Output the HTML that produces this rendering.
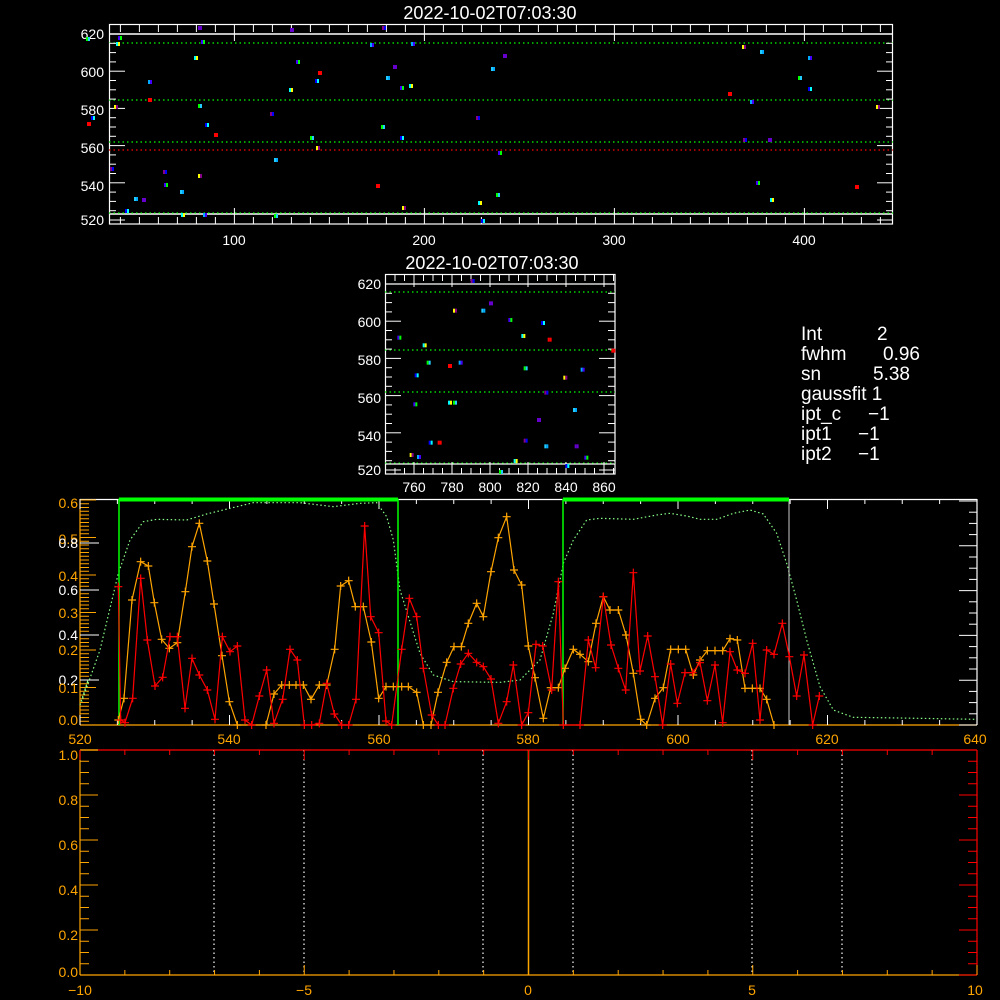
<!DOCTYPE html>
<html><head><meta charset="utf-8"><style>
html,body{margin:0;padding:0;background:#000;width:1000px;height:1000px;overflow:hidden}
svg{display:block}
text{font-family:"Liberation Sans",sans-serif}
</style></head><body>
<svg id="s" width="1000" height="1000" viewBox="0 0 1000 1000" xmlns="http://www.w3.org/2000/svg">
<rect width="1000" height="1000" fill="#000"/>
<text x="490" y="19" fill="#fff" font-size="18" text-anchor="middle">2022-10-02T07:03:30</text>
<rect x="109.5" y="24.5" width="783" height="199.5" fill="none" stroke="#fff" stroke-width="1.2"/>
<line x1="109" y1="34" x2="893" y2="34" stroke="#fff" stroke-width="1.5"/>
<line x1="109" y1="214" x2="893" y2="214" stroke="#fff" stroke-width="1.5"/>
<g stroke="#0f0" stroke-dasharray="1.5 3" stroke-width="1.2">
<line x1="109" y1="43" x2="893" y2="43"/><line x1="109" y1="100" x2="893" y2="100"/>
<line x1="109" y1="142" x2="893" y2="142"/><line x1="109" y1="213" x2="893" y2="213"/></g>
<line x1="109" y1="150" x2="893" y2="150" stroke="#f00" stroke-dasharray="1.5 3" stroke-width="1.2"/>
<g fill="#fff" font-size="14" text-anchor="end">
<text x="104" y="39">620</text><text x="104" y="77">600</text><text x="104" y="115">580</text>
<text x="104" y="153">560</text><text x="104" y="191">540</text><text x="104" y="225">520</text></g>
<g fill="#fff" font-size="14" text-anchor="middle">
<text x="234" y="245">100</text><text x="424" y="245">200</text><text x="614" y="245">300</text><text x="804" y="245">400</text></g>
<g id="topticks" stroke="#fff" stroke-width="1"></g>
<g id="toppts"></g>
<text x="492" y="269" fill="#fff" font-size="18" text-anchor="middle">2022-10-02T07:03:30</text>
<rect x="385.5" y="274.5" width="229.5" height="199.5" fill="none" stroke="#fff" stroke-width="1.2"/>
<line x1="385" y1="284" x2="615" y2="284" stroke="#fff" stroke-width="1.2"/>
<line x1="385" y1="464" x2="615" y2="464" stroke="#fff" stroke-width="1.2"/>
<g stroke="#0f0" stroke-dasharray="1.5 3" stroke-width="1.2">
<line x1="385" y1="292" x2="615" y2="292"/><line x1="385" y1="350" x2="615" y2="350"/><line x1="385" y1="392" x2="615" y2="392"/></g>
<line x1="385" y1="463" x2="615" y2="463" stroke="#0f0" stroke-dasharray="1.5 3"/>
<g fill="#fff" font-size="14" text-anchor="end">
<text x="381" y="289">620</text><text x="381" y="327">600</text><text x="381" y="365">580</text>
<text x="381" y="403">560</text><text x="381" y="441">540</text><text x="381" y="475">520</text></g>
<g fill="#fff" font-size="14" text-anchor="middle">
<text x="414" y="492">760</text><text x="452" y="492">780</text><text x="490" y="492">800</text>
<text x="528" y="492">820</text><text x="566" y="492">840</text><text x="604" y="492">860</text></g>
<g id="midticks" stroke="#fff" stroke-width="1"></g>
<g id="midpts"></g>
<g fill="#fff" font-size="19">
<text x="801" y="340">Int</text><text x="877" y="340">2</text>
<text x="801" y="360">fwhm</text><text x="883" y="360">0.96</text>
<text x="801" y="380">sn</text><text x="873" y="380">5.38</text>
<text x="801" y="400">gaussfit 1</text>
<text x="801" y="420">ipt_c</text><text x="868" y="420">−1</text>
<text x="801" y="440">ipt1</text><text x="858" y="440">−1</text>
<text x="801" y="460">ipt2</text><text x="858" y="460">−1</text></g>
<line x1="80" y1="499.5" x2="977" y2="499.5" stroke="#fff" stroke-width="1.2"/>
<line x1="977" y1="499" x2="977" y2="725" stroke="#fff" stroke-width="1.2"/>
<line x1="80" y1="499" x2="80" y2="725" stroke="#ffa500" stroke-width="1.2"/>
<line x1="80" y1="725" x2="977" y2="725" stroke="#ffa500" stroke-width="1.2"/>
<g id="spticks"></g>
<polyline id="green" fill="none" stroke="#8f8" stroke-width="1.2" stroke-dasharray="1.5 2.5"/>
<g stroke="#0f0" stroke-width="1.5">
<line x1="119" y1="499" x2="119" y2="725"/><line x1="398" y1="499" x2="398" y2="725"/>
<line x1="563" y1="499" x2="563" y2="725"/><line x1="789" y1="499" x2="789" y2="725" stroke="#ccc" stroke-width="1"/></g>
<line x1="119" y1="499.5" x2="398" y2="499.5" stroke="#0f0" stroke-width="4"/>
<line x1="563" y1="499.5" x2="789" y2="499.5" stroke="#0f0" stroke-width="4"/>
<g id="curves"></g>
<g font-size="14">
<text x="78" y="508" fill="#ffa500" text-anchor="end">0.6</text>
<text x="78" y="544" fill="#ffa500" text-anchor="end">0.5</text>
<text x="78" y="548" fill="#fff" text-anchor="end">0.8</text>
<text x="78" y="581" fill="#ffa500" text-anchor="end">0.4</text>
<text x="78" y="595" fill="#fff" text-anchor="end">0.6</text>
<text x="78" y="618" fill="#ffa500" text-anchor="end">0.3</text>
<text x="78" y="640" fill="#fff" text-anchor="end">0.4</text>
<text x="78" y="655" fill="#ffa500" text-anchor="end">0.2</text>
<text x="78" y="685" fill="#fff" text-anchor="end">0.2</text>
<text x="78" y="693" fill="#ffa500" text-anchor="end">0.1</text>
<text x="78" y="725" fill="#ffa500" text-anchor="end">0.0</text></g>
<g fill="#ffa500" font-size="14" text-anchor="middle">
<text x="80" y="744">520</text><text x="229" y="744">540</text><text x="379" y="744">560</text>
<text x="528" y="744">580</text><text x="678" y="744">600</text><text x="827" y="744">620</text><text x="975" y="744">640</text></g>
<line x1="80" y1="750" x2="977" y2="750" stroke="#f00" stroke-width="1.2"/>
<line x1="977" y1="750" x2="977" y2="975" stroke="#f00" stroke-width="1.2"/>
<line x1="80" y1="750" x2="80" y2="975" stroke="#ffa500" stroke-width="1.2"/>
<line x1="80" y1="975" x2="977" y2="975" stroke="#ffa500" stroke-width="1.2"/>
<line x1="80" y1="750" x2="98" y2="750" stroke="#ff0" stroke-width="1.2"/>
<g stroke="#fff" stroke-dasharray="1.5 3" stroke-width="1.2">
<line x1="214" y1="750" x2="214" y2="975"/><line x1="304" y1="750" x2="304" y2="975"/>
<line x1="483" y1="750" x2="483" y2="975"/><line x1="573" y1="750" x2="573" y2="975"/>
<line x1="752" y1="750" x2="752" y2="975"/><line x1="842" y1="750" x2="842" y2="975"/></g>
<line x1="528.5" y1="750" x2="528.5" y2="975" stroke="#ffa500" stroke-width="1.5"/>
<g id="btticks"></g>
<g fill="#ffa500" font-size="14" text-anchor="end">
<text x="78" y="760">1.0</text><text x="78" y="805">0.8</text><text x="78" y="850">0.6</text>
<text x="78" y="895">0.4</text><text x="78" y="940">0.2</text><text x="78" y="977">0.0</text></g>
<g fill="#ffa500" font-size="14" text-anchor="middle">
<text x="80" y="995">−10</text><text x="304" y="995">−5</text><text x="528" y="995">0</text>
<text x="752" y="995">5</text><text x="975" y="995">10</text></g>
</svg>
<script>
var NS="http://www.w3.org/2000/svg";
function el(p,t,a){var e=document.createElementNS(NS,t);for(var k in a)e.setAttribute(k,a[k]);p.appendChild(e);return e;}
function g(id){return document.getElementById(id);}
var tt=g("topticks");
for(var v=520;v<=620;v+=5){var y=220-(v-520)*1.86;var L=(v%20==0)?16:7;el(tt,"line",{x1:109,y1:y,x2:109+L,y2:y});el(tt,"line",{x1:893,y1:y,x2:893-L,y2:y});}
for(var v=40;v<=440;v+=10){var x=109+(v-34)*1.9;var L=(v%100==0)?16:7;el(tt,"line",{x1:x,y1:224,x2:x,y2:224-L});el(tt,"line",{x1:x,y1:25,x2:x,y2:25+L});}
var mt=g("midticks");
for(var v=520;v<=620;v+=5){var y=470-(v-520)*1.86;var L=(v%20==0)?16:7;el(mt,"line",{x1:385,y1:y,x2:385+L,y2:y});el(mt,"line",{x1:615,y1:y,x2:615-L,y2:y});}
for(var v=750;v<=865;v+=5){var x=414+(v-760)*1.9;var L=(v%20==0)?12:6;el(mt,"line",{x1:x,y1:474,x2:x,y2:474-L});el(mt,"line",{x1:x,y1:275,x2:x,y2:275+L});}
var cols=["#40f","#0ff","#0f0","#00f","#f00","#ff0","#0af","#808","#2cf","#60c"];
function pts(id,list){var G=g(id);list.forEach(function(p,i){el(G,"rect",{x:p[0]-2,y:p[1]-2,width:2,height:4,fill:cols[i%10]});el(G,"rect",{x:p[0],y:p[1]-2,width:2,height:4,fill:cols[(i*3+2)%10]});});}
pts("toppts",[[120,38],[118,44],[88,39],[93,118],[89,124],[116,107],[150,82],[165,172],[182,192],[200,28],[203,42],[196,58],[200,106],[207,125],[216,135],[200,176],[205,215],[272,114],[276,160],[292,30],[298,62],[291,90],[312,138],[317,81],[320,73],[318,148],[372,45],[384,28],[388,78],[395,67],[402,88],[411,86],[383,127],[402,138],[378,186],[404,208],[413,44],[478,118],[493,69],[505,56],[500,153],[480,203],[498,195],[483,221],[730,94],[744,47],[752,102],[745,140],[762,52],[770,140],[758,183],[772,200],[800,78],[810,89],[857,187],[878,107],[810,58],[112,169],[136,199],[144,200],[166,185],[183,215],[276,216],[127,211],[150,100]]);
var mp=[[178,263],[254,286],[266,338],[230,376],[330,348],[345,182],[362,338],[398,93],[430,182],[453,160],[511,210],[550,258],[557,355],[609,219],[629,269],[676,383],[728,359],[619,428],[705,480],[597,510],[226,463],[330,458],[345,458],[272,578],[299,578],[215,615],[237,621],[557,572],[619,589],[710,589],[739,623],[527,633],[483,666],[682,648],[820,302]].map(function(p){return [340+p[0]/3,250+p[1]/3];});
pts("midpts",mp);
var st=g("spticks");
for(var i=0;i<=60;i++){var y=725-i*3.75;var L=(i%10==0)?16:9;el(st,"line",{x1:80,y1:y,x2:80+L,y2:y,stroke:"#ffa500"});}
[680,635,590,543].forEach(function(y){el(st,"line",{x1:80,y1:y,x2:99,y2:y,stroke:"#fff"});});
for(var i=0;i<=20;i++){var y=725-i*11.2;var L=(i%4==0)?18:8;el(st,"line",{x1:977,y1:y,x2:977-L,y2:y,stroke:"#fff"});}
for(var v=520;v<=640;v+=5){var x=80+(v-520)*7.475;var L=(v%20==0)?10:5;el(st,"line",{x1:x,y1:725,x2:x,y2:725-L,stroke:"#fff"});el(st,"line",{x1:x,y1:499,x2:x,y2:499+L,stroke:"#fff"});}
var bt=g("btticks");
for(var i=0;i<=20;i++){var y=975-i*11.25;var L=(i%4==0)?18:9;el(bt,"line",{x1:80,y1:y,x2:80+L,y2:y,stroke:"#ffa500"});el(bt,"line",{x1:977,y1:y,x2:977-L,y2:y,stroke:"#f00"});}
for(var v=-10;v<=10;v+=1){var x=80+(v+10)*44.85;var L=(v%5==0)?10:5;el(bt,"line",{x1:x,y1:975,x2:x,y2:975-L,stroke:"#ffa500"});el(bt,"line",{x1:x,y1:750,x2:x,y2:750+L,stroke:"#f00"});}
function cv(a,off){var r=[];for(var i=0;i<a.length;i+=2)r.push([off+a[i]/3,490+a[i+1]/3]);return r;}
var green=[[80,705],[88,680]].concat(cv([245,635,300,480,355,250,390,150,430,95,470,88,560,90,620,72,690,55,760,38,900,38,1000,50,1080,40,1130,38,1160,80,1180,150,1200,300,1260,490,1300,555,1360,575,1500,577],0),cv([60,570,120,510,160,370,190,220,220,150,260,90,300,85,400,88,470,75,510,70,560,78,600,88,650,88,700,70,750,60,790,72,830,130,860,220,890,330,920,450,960,590,1000,660,1060,682,1200,684,1430,688],500));
g("green").setAttribute("points",green.map(function(p){return p.join(",")}).join(" "));
var orange=cv([355,690,372,625,396,330,422,215,445,228,463,338,485,448,508,475,532,458,556,305,576,170,598,100,622,213,642,342,666,497,688,635,712,705,798,705,822,612,845,585,868,585,888,585,910,585,933,628,958,585,980,585,1004,478,1022,288,1046,272,1066,350,1090,350,1114,456,1136,625,1158,590,1180,590,1205,590,1225,590,1250,607,1270,705,1293,705,1314,607,1340,517,1362,470,1384,470,1405,400,1430,340,1450,380,1473,245,1495,143],0).concat(cv([20,80,42,240,65,285,85,468,105,563,130,685,152,593,175,593,195,535,220,478,240,493,265,515,288,400,310,320,330,360,355,360,378,435,400,550,422,688,440,705,465,625,490,593,512,478,535,478,557,478,580,555,600,510,622,482,645,482,668,482,690,446,712,450,735,595,757,595,780,595,800,628,822,705],500));
var red=cv([355,290,362,690,375,698,398,625,422,265,442,450,465,588,488,562,510,440,532,440,555,655,576,505,598,555,622,600,645,688,667,440,690,485,712,468,735,690,755,705,778,618,800,540,822,700,848,628,870,478,892,510,913,705,935,705,958,700,980,580,1003,672,1025,705,1046,705,1068,628,1094,108,1112,380,1136,428,1158,693,1175,705,1205,478,1228,325,1250,380,1270,535,1295,675,1315,705,1335,705,1360,595,1382,522,1405,490,1430,517,1450,530,1473,567,1495,700],0).concat(cv([20,635,40,525,65,705,85,668,108,463,128,468,155,600,175,275,190,705,240,705,265,450,287,533,310,320,333,465,355,535,377,600,400,248,420,543,443,438,465,560,488,705,512,522,532,640,555,548,578,548,600,518,622,632,645,525,668,698,690,485,712,540,735,550,758,460,780,690,800,480,822,493,847,400,868,500,890,618,912,495,938,705,958,618],500));
var C=g("curves");
function draw(a,c){el(C,"polyline",{points:a.map(function(p){return p.join(",")}).join(" "),fill:"none",stroke:c,"stroke-width":1.2});a.forEach(function(p){el(C,"path",{d:"M"+(p[0]-4)+","+p[1]+"h8M"+p[0]+","+(p[1]-4)+"v8",stroke:c,"stroke-width":1.2});});}
draw(orange,"#ffa500");draw(red,"#f00");
</script>
</body></html>
